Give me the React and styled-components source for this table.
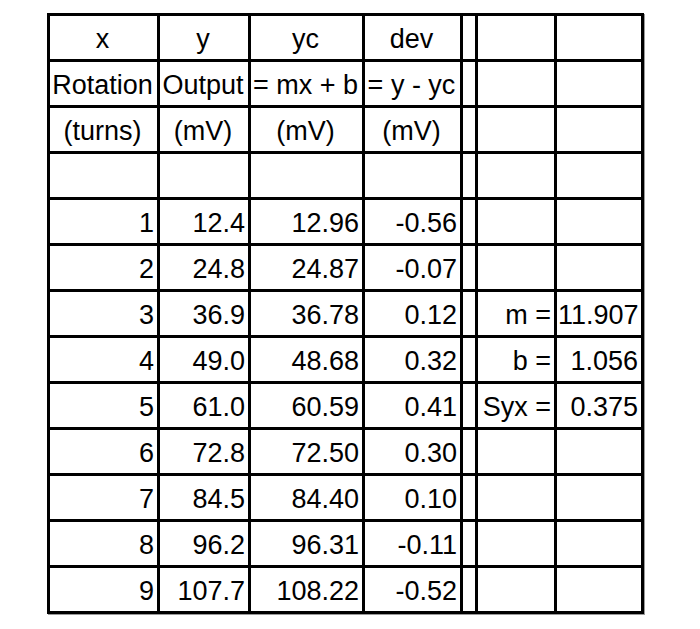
import React from "react";
import styled, { createGlobalStyle } from "styled-components";

const GlobalStyle = createGlobalStyle`
  html, body {
    margin: 0;
    padding: 0;
    background: #ffffff;
  }
  body {
    font-family: "Liberation Sans", Arial, sans-serif;
    color: #000;
  }
`;

const Page = styled.div`
  width: 700px;
  height: 629px;
  padding: 13px 0 0 47px;
  box-sizing: border-box;
`;

const Sheet = styled.div`
  display: grid;
  grid-template-columns: 107px 88px 111px 95px 12px 76px 84px;
  grid-auto-rows: 43px;
  gap: 3px;
  padding: 3px;
  width: max-content;
  background: #000;
  box-shadow: 1px 1px 0 #9a9a9a;
`;

const Cell = styled.div`
  background: #fff;
  height: 43px;
  box-sizing: border-box;
  padding: 4px 3px 0 1px;
  line-height: 39px;
  font-size: 27px;
  white-space: nowrap;
  overflow: visible;
  text-align: ${(p) => (p.$head ? "center" : "right")};
`;

const heads = [
  ["x", "y", "yc", "dev"],
  ["Rotation", "Output", "= mx + b", "= y - yc"],
  ["(turns)", "(mV)", "(mV)", "(mV)"],
  ["", "", "", ""],
];

const data = [
  ["1", "12.4", "12.96", "-0.56"],
  ["2", "24.8", "24.87", "-0.07"],
  ["3", "36.9", "36.78", "0.12"],
  ["4", "49.0", "48.68", "0.32"],
  ["5", "61.0", "60.59", "0.41"],
  ["6", "72.8", "72.50", "0.30"],
  ["7", "84.5", "84.40", "0.10"],
  ["8", "96.2", "96.31", "-0.11"],
  ["9", "107.7", "108.22", "-0.52"],
];

const stats = {
  2: ["m =", "11.907"],
  3: ["b =", "1.056"],
  4: ["Syx =", "0.375"],
};

export default function App() {
  return (
    <>
      <GlobalStyle />
      <Page>
        <Sheet>
          {heads.map((row, r) => (
            <React.Fragment key={"h" + r}>
              {row.map((t, c) => (
                <Cell key={c} $head>
                  {t}
                </Cell>
              ))}
              <Cell />
              <Cell />
              <Cell />
            </React.Fragment>
          ))}
          {data.map((row, r) => (
            <React.Fragment key={"d" + r}>
              {row.map((t, c) => (
                <Cell key={c}>{t}</Cell>
              ))}
              <Cell />
              <Cell>{stats[r] ? stats[r][0] : ""}</Cell>
              <Cell>{stats[r] ? stats[r][1] : ""}</Cell>
            </React.Fragment>
          ))}
        </Sheet>
      </Page>
    </>
  );
}
